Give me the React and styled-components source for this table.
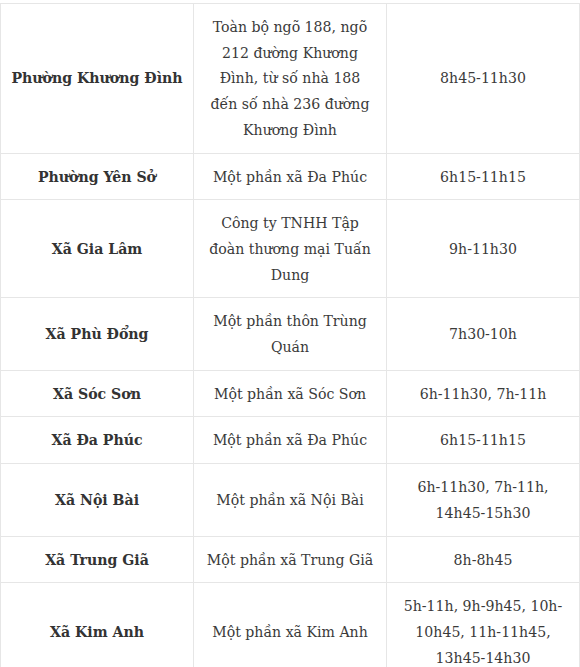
import React from "react";
import styled, { createGlobalStyle } from "styled-components";

const GlobalStyle = createGlobalStyle`
  html, body {
    margin: 0;
    padding: 0;
    background: #ffffff;
    height: 667px;
    overflow: hidden;
  }
`;

const Page = styled.div`
  padding-top: 3px;
`;

const Table = styled.table`
  width: 580px;
  border-collapse: collapse;
  table-layout: fixed;
  font-family: "DejaVu Serif", "Liberation Serif", serif;
  font-stretch: condensed;
  font-size: 15.7px;
  line-height: 25.7px;
  color: #383838;
`;

const Cell = styled.td`
  border: 1px solid #e6e6e6;
  padding: 10px 6px;
  text-align: center;
  vertical-align: middle;
  font-weight: ${(p) => (p.$bold ? 700 : 400)};
  color: ${(p) => (p.$bold ? "#333333" : "#3a3a3a")};
`;

const rows = [
  {
    area: "Phường Khương Đình",
    place: [
      "Toàn bộ ngõ 188, ngõ",
      "212 đường Khương",
      "Đình, từ số nhà 188",
      "đến số nhà 236 đường",
      "Khương Đình",
    ],
    time: ["8h45-11h30"],
  },
  { area: "Phường Yên Sở", place: ["Một phần xã Đa Phúc"], time: ["6h15-11h15"] },
  {
    area: "Xã Gia Lâm",
    place: ["Công ty TNHH Tập", "đoàn thương mại Tuấn", "Dung"],
    time: ["9h-11h30"],
  },
  { area: "Xã Phù Đổng", place: ["Một phần thôn Trùng", "Quán"], time: ["7h30-10h"] },
  { area: "Xã Sóc Sơn", place: ["Một phần xã Sóc Sơn"], time: ["6h-11h30, 7h-11h"] },
  { area: "Xã Đa Phúc", place: ["Một phần xã Đa Phúc"], time: ["6h15-11h15"] },
  {
    area: "Xã Nội Bài",
    place: ["Một phần xã Nội Bài"],
    time: ["6h-11h30, 7h-11h,", "14h45-15h30"],
  },
  { area: "Xã Trung Giã", place: ["Một phần xã Trung Giã"], time: ["8h-8h45"] },
  {
    area: "Xã Kim Anh",
    place: ["Một phần xã Kim Anh"],
    time: ["5h-11h, 9h-9h45, 10h-", "10h45, 11h-11h45,", "13h45-14h30"],
  },
];

const Lines = ({ lines }) =>
  lines.map((l, i) => (
    <React.Fragment key={i}>
      {i > 0 && <br />}
      {l}
    </React.Fragment>
  ));

export default function App() {
  return (
    <Page>
      <GlobalStyle />
      <Table>
        <tbody>
          {rows.map((r) => (
            <tr key={r.area}>
              <Cell $bold>{r.area}</Cell>
              <Cell>
                <Lines lines={r.place} />
              </Cell>
              <Cell>
                <Lines lines={r.time} />
              </Cell>
            </tr>
          ))}
        </tbody>
      </Table>
    </Page>
  );
}
